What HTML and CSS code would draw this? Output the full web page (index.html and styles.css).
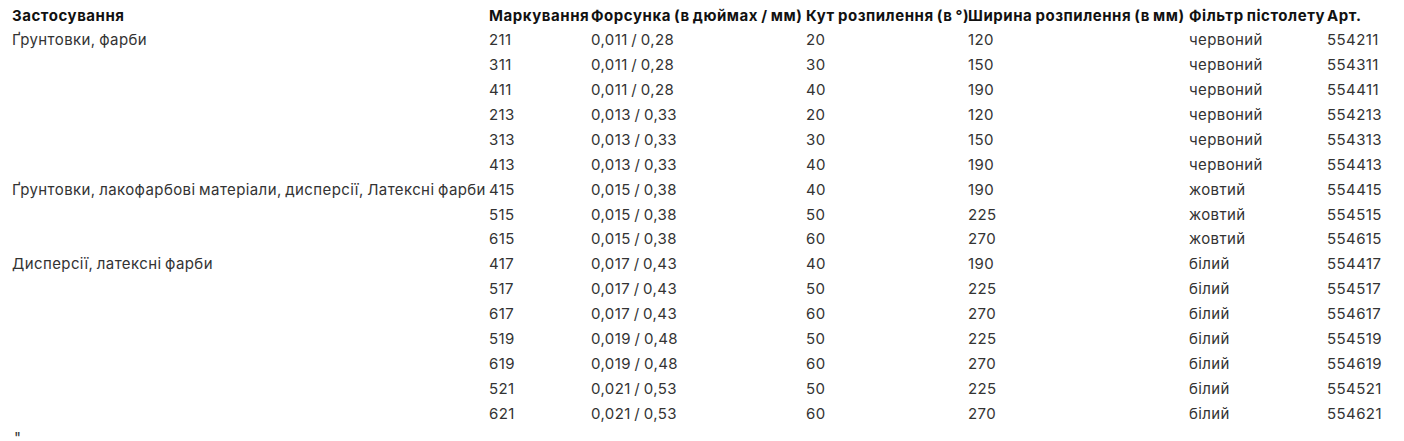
FILE: index.html
```html
<!DOCTYPE html>
<html lang="uk">
<head>
<meta charset="utf-8">
<title>Форсунки</title>
<link rel="stylesheet" href="styles.css">
</head>
<body>
<div class="page">
<table class="spec">
<colgroup>
<col class="c-app"><col class="c-mark"><col class="c-nozzle"><col class="c-angle"><col class="c-width"><col class="c-filter"><col class="c-art">
</colgroup>
<thead>
<tr><th>Застосування</th><th>Маркування</th><th>Форсунка (в дюймах / мм)</th><th>Кут розпилення (в °)</th><th>Ширина розпилення (в мм)</th><th>Фільтр пістолету</th><th>Арт.</th></tr>
</thead>
<tbody>
<tr><td>Ґрунтовки, фарби</td><td>211</td><td>0,011 / 0,28</td><td>20</td><td>120</td><td>червоний</td><td>554211</td></tr>
<tr><td></td><td>311</td><td>0,011 / 0,28</td><td>30</td><td>150</td><td>червоний</td><td>554311</td></tr>
<tr><td></td><td>411</td><td>0,011 / 0,28</td><td>40</td><td>190</td><td>червоний</td><td>554411</td></tr>
<tr><td></td><td>213</td><td>0,013 / 0,33</td><td>20</td><td>120</td><td>червоний</td><td>554213</td></tr>
<tr><td></td><td>313</td><td>0,013 / 0,33</td><td>30</td><td>150</td><td>червоний</td><td>554313</td></tr>
<tr><td></td><td>413</td><td>0,013 / 0,33</td><td>40</td><td>190</td><td>червоний</td><td>554413</td></tr>
<tr><td>Ґрунтовки, лакофарбові матеріали, дисперсії, Латексні фарби</td><td>415</td><td>0,015 / 0,38</td><td>40</td><td>190</td><td>жовтий</td><td>554415</td></tr>
<tr><td></td><td>515</td><td>0,015 / 0,38</td><td>50</td><td>225</td><td>жовтий</td><td>554515</td></tr>
<tr><td></td><td>615</td><td>0,015 / 0,38</td><td>60</td><td>270</td><td>жовтий</td><td>554615</td></tr>
<tr><td>Дисперсії, латексні фарби</td><td>417</td><td>0,017 / 0,43</td><td>40</td><td>190</td><td>білий</td><td>554417</td></tr>
<tr><td></td><td>517</td><td>0,017 / 0,43</td><td>50</td><td>225</td><td>білий</td><td>554517</td></tr>
<tr><td></td><td>617</td><td>0,017 / 0,43</td><td>60</td><td>270</td><td>білий</td><td>554617</td></tr>
<tr><td></td><td>519</td><td>0,019 / 0,48</td><td>50</td><td>225</td><td>білий</td><td>554519</td></tr>
<tr><td></td><td>619</td><td>0,019 / 0,48</td><td>60</td><td>270</td><td>білий</td><td>554619</td></tr>
<tr><td></td><td>521</td><td>0,021 / 0,53</td><td>50</td><td>225</td><td>білий</td><td>554521</td></tr>
<tr><td></td><td>621</td><td>0,021 / 0,53</td><td>60</td><td>270</td><td>білий</td><td>554621</td></tr>
</tbody>
</table>
<p class="tail">"</p>
</div>
</body>
</html>
```
FILE: styles.css
```css
html, body {
  margin: 0;
  background: #ffffff;
}
.page {
  padding: 3.5px 0 0 12px;
  font-family: Inter, "Noto Sans", sans-serif;
  font-size: 15px;
  color: #333333;
  letter-spacing: 0.4px;
  word-spacing: -1px;
}
.spec {
  border-collapse: collapse;
  table-layout: fixed;
  width: 1380px;
}
.c-app { width: 477px; }
.c-mark { width: 102px; }
.c-nozzle { width: 215px; }
.c-angle { width: 162px; }
.c-width { width: 221px; }
.c-filter { width: 138px; }
.c-art { width: 65px; }
.spec th,
.spec td {
  padding: 0;
  text-align: left;
  vertical-align: top;
  line-height: 24.875px;
  white-space: nowrap;
}
.spec th {
  font-weight: 700;
  color: #111111;
  letter-spacing: 0.55px;
}
.tail {
  margin: 0;
  line-height: 24.875px;
  color: #333333;
  padding-left: 2px;
}
```
